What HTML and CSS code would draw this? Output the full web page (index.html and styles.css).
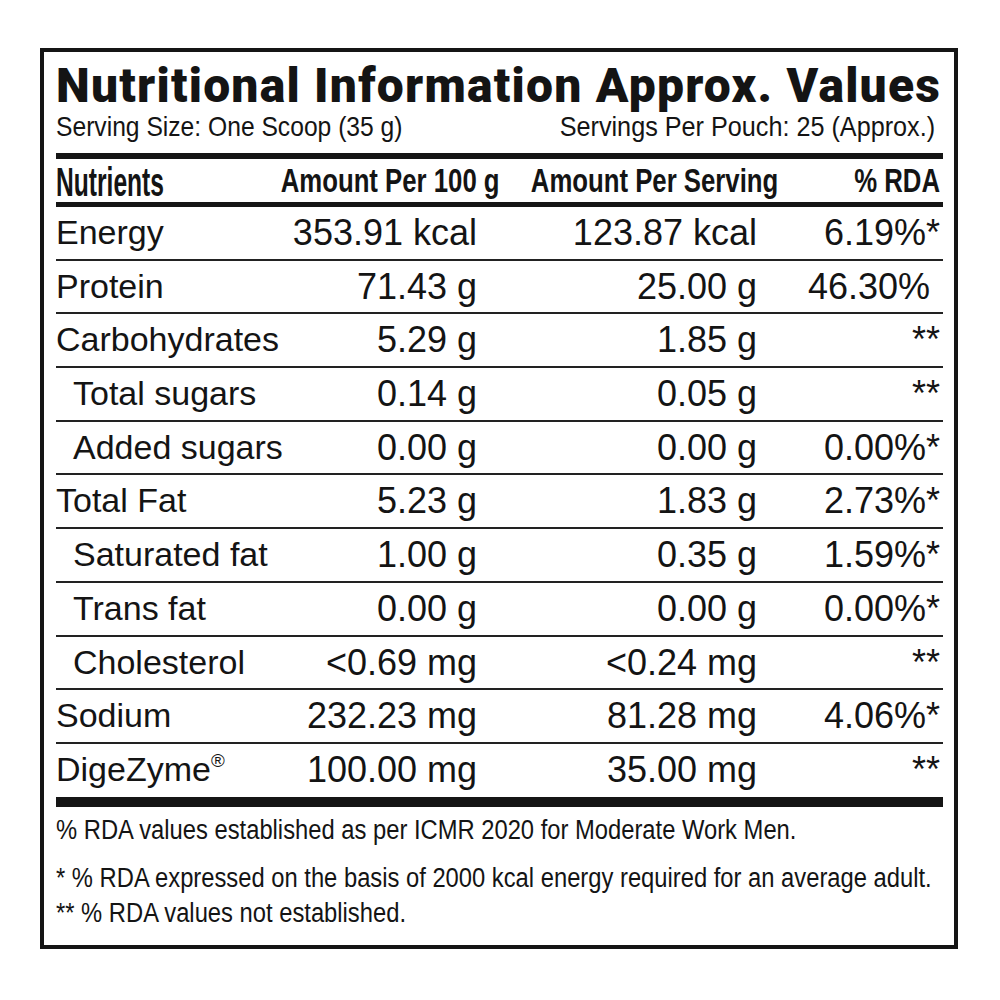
FILE: index.html
```html
<!DOCTYPE html>
<html>
<head>
<meta charset="utf-8">
<link rel="stylesheet" href="styles.css">
</head>
<body>
<div class="label">
  <h1 class="title">Nutritional Information Approx. Values</h1>
  <div class="serving">
    <span class="cond left">Serving Size: One Scoop (35 g)</span>
    <span class="cond right">Servings Per Pouch: 25 (Approx.)</span>
  </div>
  <div class="table">
    <div class="row head">
      <div class="hcell first"><span class="squeeze">Nutrients</span></div>
      <div class="hcell"><span class="hcond">Amount Per 100 g</span></div>
      <div class="hcell c2"><span class="hcond">Amount Per Serving</span></div>
      <div class="hcell c3"><span class="hcond">% RDA</span></div>
    </div>
    <div class="row"><div class="name">Energy</div><div class="val">353.91 kcal</div><div class="val">123.87 kcal</div><div class="val rda">6.19%*</div></div>
    <div class="row"><div class="name">Protein</div><div class="val">71.43 g</div><div class="val">25.00 g</div><div class="val rda nostar">46.30%</div></div>
    <div class="row"><div class="name">Carbohydrates</div><div class="val">5.29 g</div><div class="val">1.85 g</div><div class="val rda">**</div></div>
    <div class="row"><div class="name sub">Total sugars</div><div class="val">0.14 g</div><div class="val">0.05 g</div><div class="val rda">**</div></div>
    <div class="row"><div class="name sub">Added sugars</div><div class="val">0.00 g</div><div class="val">0.00 g</div><div class="val rda">0.00%*</div></div>
    <div class="row"><div class="name">Total Fat</div><div class="val">5.23 g</div><div class="val">1.83 g</div><div class="val rda">2.73%*</div></div>
    <div class="row"><div class="name sub">Saturated fat</div><div class="val">1.00 g</div><div class="val">0.35 g</div><div class="val rda">1.59%*</div></div>
    <div class="row"><div class="name sub">Trans fat</div><div class="val">0.00 g</div><div class="val">0.00 g</div><div class="val rda">0.00%*</div></div>
    <div class="row"><div class="name sub">Cholesterol</div><div class="val">&lt;0.69 mg</div><div class="val">&lt;0.24 mg</div><div class="val rda">**</div></div>
    <div class="row"><div class="name">Sodium</div><div class="val">232.23 mg</div><div class="val">81.28 mg</div><div class="val rda">4.06%*</div></div>
    <div class="row last"><div class="name">DigeZyme<sup class="reg">®</sup></div><div class="val">100.00 mg</div><div class="val">35.00 mg</div><div class="val rda">**</div></div>
  </div>
  <div class="notes">
    <p class="n1"><span class="cond left">% RDA values established as per ICMR 2020 for Moderate Work Men.</span></p>
    <p class="n2"><span class="cond left">* % RDA expressed on the basis of 2000 kcal energy required for an average adult.</span></p>
    <p class="n3"><span class="cond left">** % RDA values not established.</span></p>
  </div>
</div>
</body>
</html>
```
FILE: styles.css
```css
body {
  margin: 0;
  background: #ffffff;
}

.label {
  box-sizing: border-box;
  margin: 48px 0 0 40px;
  width: 918px;
  height: 901px;
  border: 4px solid #151515;
  padding: 10px 11px 0 12px;
  color: #141414;
  font-family: "Liberation Sans", Arial, sans-serif;
  overflow: hidden;
}

.title {
  margin: 0;
  font-family: Roboto, "Liberation Sans", sans-serif;
  font-weight: 900;
  font-size: 48px;
  line-height: 48px;
  letter-spacing: 1.25px;
  white-space: nowrap;
}

.cond {
  display: inline-block;
  white-space: nowrap;
  transform: scaleX(0.88);
}

.cond.left {
  transform-origin: left center;
}

.cond.right {
  transform-origin: right center;
  transform: scaleX(0.9);
}

.serving {
  display: flex;
  justify-content: space-between;
  margin-top: 2px;
  padding-right: 8px;
  font-size: 28px;
  line-height: 30px;
}

.table {
  margin-top: 11px;
  border-top: 6px solid #151515;
}

.row {
  display: grid;
  grid-template-columns: 224px 220px 280px 163px;
  box-sizing: border-box;
  height: 53.7px;
  border-bottom: 2px solid #222;
}

.row.head {
  height: 48px;
  border-bottom: 5px solid #151515;
}

.row.last {
  height: 63px;
  border-bottom: 10px solid #151515;
}

.hcell {
  display: flex;
  justify-content: flex-end;
  font-weight: 700;
  font-size: 33px;
  line-height: 43px;
  white-space: nowrap;
  min-width: 0;
}

.hcond {
  display: block;
  flex: none;
  transform: scaleX(0.78);
  transform-origin: right center;
}

.hcell.first {
  justify-content: flex-start;
  font-size: 40px;
  padding-top: 3px;
  line-height: 40px;
}

.hcell.c2 {
  padding-right: 2px;
}

.hcell.c3 {
  padding-right: 3px;
}

.squeeze {
  display: block;
  flex: none;
  transform: scaleX(0.615);
  transform-origin: left center;
}

.name {
  font-size: 34px;
  line-height: 51.7px;
  white-space: nowrap;
}

.name.sub {
  padding-left: 17px;
}

.reg {
  font-size: 0.55em;
  vertical-align: 0.75em;
  line-height: 0;
}

.val {
  font-size: 36px;
  line-height: 51.7px;
  text-align: right;
  padding-right: 23px;
  white-space: nowrap;
}

.val.rda {
  padding-right: 3px;
}

.val.rda.nostar {
  padding-right: 13px;
}

.notes {
  font-size: 27px;
  line-height: 35px;
}

.notes p {
  margin: 0;
  white-space: nowrap;
}

.notes .n1 {
  margin-top: 6px;
}

.notes .n2 {
  margin-top: 13px;
}
```
